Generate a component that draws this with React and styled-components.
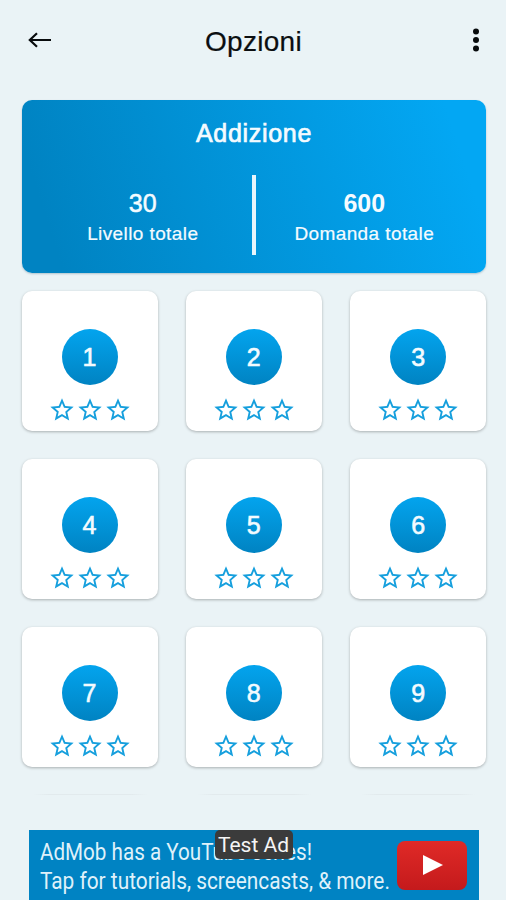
import styled, { createGlobalStyle } from "styled-components";

const levels = [1, 2, 3, 4, 5, 6, 7, 8, 9];

const Star = () => (
  <svg width="28" height="28" viewBox="0 0 24 24" fill="#159fdd">
    <path d="M22 9.24l-7.19-.62L12 2 9.19 8.63 2 9.24l5.46 4.73L5.82 21 12 17.27 18.18 21l-1.63-7.03L22 9.24zM12 15.4l-3.76 2.27 1-4.28-3.32-2.88 4.38-.38L12 6.1l1.71 4.04 4.38.38-3.32 2.88 1 4.28L12 15.4z" />
  </svg>
);

const App = () => {
  return (
    <Page>
      <GlobalStyle />
      <Header>
        <IconBtn aria-label="Indietro">
          <svg width="24" height="18" viewBox="0 0 24 18" fill="none">
            <path
              d="M23 9H2M9 2.2L1.8 9L9 15.8"
              stroke="#080b0d"
              strokeWidth="2.2"
            />
          </svg>
        </IconBtn>
        <Title>Opzioni</Title>
        <IconBtn aria-label="Menu">
          <svg width="8" height="24" viewBox="0 0 8 24" fill="#080b0d">
            <circle cx="4" cy="3.5" r="3" />
            <circle cx="4" cy="12" r="3" />
            <circle cx="4" cy="20.5" r="3" />
          </svg>
        </IconBtn>
      </Header>

      <Summary>
        <SummaryTitle>Addizione</SummaryTitle>
        <Stats>
          <Stat>
            <StatValue>30</StatValue>
            <StatLabel>Livello totale</StatLabel>
          </Stat>
          <Divider />
          <Stat>
            <StatValue $bold>600</StatValue>
            <StatLabel>Domanda totale</StatLabel>
          </Stat>
        </Stats>
      </Summary>

      <LevelGrid>
        {levels.map((level) => (
          <LevelCard key={level}>
            <LevelNumber>{level}</LevelNumber>
            <Stars>
              <Star />
              <Star />
              <Star />
            </Stars>
          </LevelCard>
        ))}
      </LevelGrid>

      <NextRow>
        <NextEdge />
        <NextEdge />
        <NextEdge />
      </NextRow>

      <AdBanner>
        <AdText>
          <AdLine $stretch={0.897}>AdMob has a YouTube series!</AdLine>
          <AdLine $stretch={0.906}>
            Tap for tutorials, screencasts, &amp; more.
          </AdLine>
        </AdText>
        <PlayBox>
          <svg width="20" height="20" viewBox="0 0 20 20" fill="#fff">
            <path d="M0 0L20 10L0 20Z" />
          </svg>
        </PlayBox>
        <AdBadge>Test Ad</AdBadge>
      </AdBanner>
    </Page>
  );
};
export default App;

const GlobalStyle = createGlobalStyle`
  * {
    box-sizing: border-box;
  }
  body {
    margin: 0;
    background-color: #eaf3f6;
    font-family: "Liberation Sans", Arial, sans-serif;
  }
`;
const Page = styled.div`
  display: flex;
  flex-direction: column;
  height: 900px;
  padding: 0 20px 0 22px;
  overflow: hidden;
`;
const Header = styled.header`
  display: flex;
  flex: none;
  justify-content: space-between;
  align-items: center;
  height: 80px;
  padding: 0 6px;
`;
const IconBtn = styled.button`
  display: flex;
  padding: 0;
  border: none;
  background: none;
  cursor: pointer;
`;
const Title = styled.h1`
  margin: 4px 17px 0 0;
  color: #0b0e10;
  font-size: 28px;
  font-weight: normal;
  line-height: 32px;
  letter-spacing: 0.3px;
  -webkit-text-stroke: 0.2px currentColor;
`;
const Summary = styled.section`
  display: flex;
  flex: none;
  flex-direction: column;
  align-items: center;
  height: 173px;
  margin-top: 20px;
  padding-top: 18px;
  border-radius: 10px;
  background: linear-gradient(72deg, #0083c2 8%, #03a7f3 92%);
  box-shadow: 0 1px 2px rgba(0, 60, 90, 0.25);
  color: #f4fbff;
`;
const SummaryTitle = styled.h2`
  margin: 0;
  font-size: 25px;
  font-weight: normal;
  line-height: 30px;
  letter-spacing: 0.7px;
  -webkit-text-stroke: 0.7px currentColor;
`;
const Stats = styled.div`
  display: flex;
  align-items: center;
  width: 100%;
  height: 80px;
  margin-top: 27px;
`;
const Stat = styled.div`
  display: flex;
  flex: 1;
  flex-direction: column;
  align-items: center;

  &:first-child {
    padding-left: 12px;
  }
  &:last-child {
    padding-right: 13px;
  }
`;
const StatValue = styled.span`
  margin-top: 7px;
  font-size: 25px;
  font-weight: ${(props) => (props.$bold ? "bold" : "normal")};
  line-height: 30px;
  -webkit-text-stroke: ${(props) => (props.$bold ? "0" : "0.5px currentColor")};
`;
const StatLabel = styled.span`
  margin-top: 1px;
  font-size: 19px;
  line-height: 30px;
  letter-spacing: 0.4px;
  -webkit-text-stroke: 0.2px currentColor;
`;
const Divider = styled.div`
  width: 4px;
  height: 80px;
  background-color: #e8f5fc;
`;
const LevelGrid = styled.main`
  display: grid;
  flex: none;
  grid-template-columns: repeat(3, 136px);
  grid-auto-rows: 140px;
  gap: 28px 28.3px;
  margin: 18px 0 0 -0.5px;
`;
const LevelCard = styled.div`
  display: flex;
  flex-direction: column;
  align-items: center;
  padding-top: 38.4px;
  border-radius: 10px;
  background-color: #fff;
  box-shadow: 0 1px 3px rgba(0, 0, 0, 0.28);
`;
const LevelNumber = styled.div`
  display: flex;
  justify-content: center;
  align-items: center;
  width: 56px;
  height: 56px;
  border-radius: 50%;
  background: linear-gradient(#03a4ee, #0083c2);
  color: #f4fbff;
  font-size: 25px;
  -webkit-text-stroke: 0.6px currentColor;
`;
const Stars = styled.div`
  display: flex;
  margin-top: 10.6px;
`;
const NextRow = styled.div`
  display: flex;
  flex: none;
  gap: 28px;
  margin-top: 27px;
`;
const NextEdge = styled.div`
  width: 136px;
  height: 1px;
  background: linear-gradient(90deg, transparent 8%, #e2eaed 20% 80%, transparent 92%);
`;
const AdBanner = styled.aside`
  position: relative;
  display: flex;
  flex: none;
  justify-content: space-between;
  width: 450px;
  height: 70px;
  margin: 35px 0 0 6.5px;
  padding: 8px 12px 0 11px;
  background-color: #0083c3;
`;
const AdText = styled.div`
  width: 350px;
  color: #dff1fa;
  font-family: Roboto, sans-serif;
  font-size: 23px;
  line-height: 29px;
`;
const AdLine = styled.div`
  width: max-content;
  transform: scaleX(${(props) => props.$stretch});
  transform-origin: left;
`;
const PlayBox = styled.div`
  display: flex;
  justify-content: center;
  align-items: center;
  width: 70px;
  height: 49px;
  margin-top: 3px;
  padding-left: 3px;
  padding-bottom: 2px;
  border-radius: 8px;
  background: linear-gradient(#e02a27, #c41a1c);
`;
const AdBadge = styled.div`
  position: absolute;
  top: 0;
  left: 186px;
  width: 78px;
  height: 29px;
  border-radius: 5px;
  background-color: #3b3b3b;
  color: #f5f5f5;
  font-family: Roboto, sans-serif;
  font-size: 21px;
  line-height: 31px;
  text-align: center;
`;
